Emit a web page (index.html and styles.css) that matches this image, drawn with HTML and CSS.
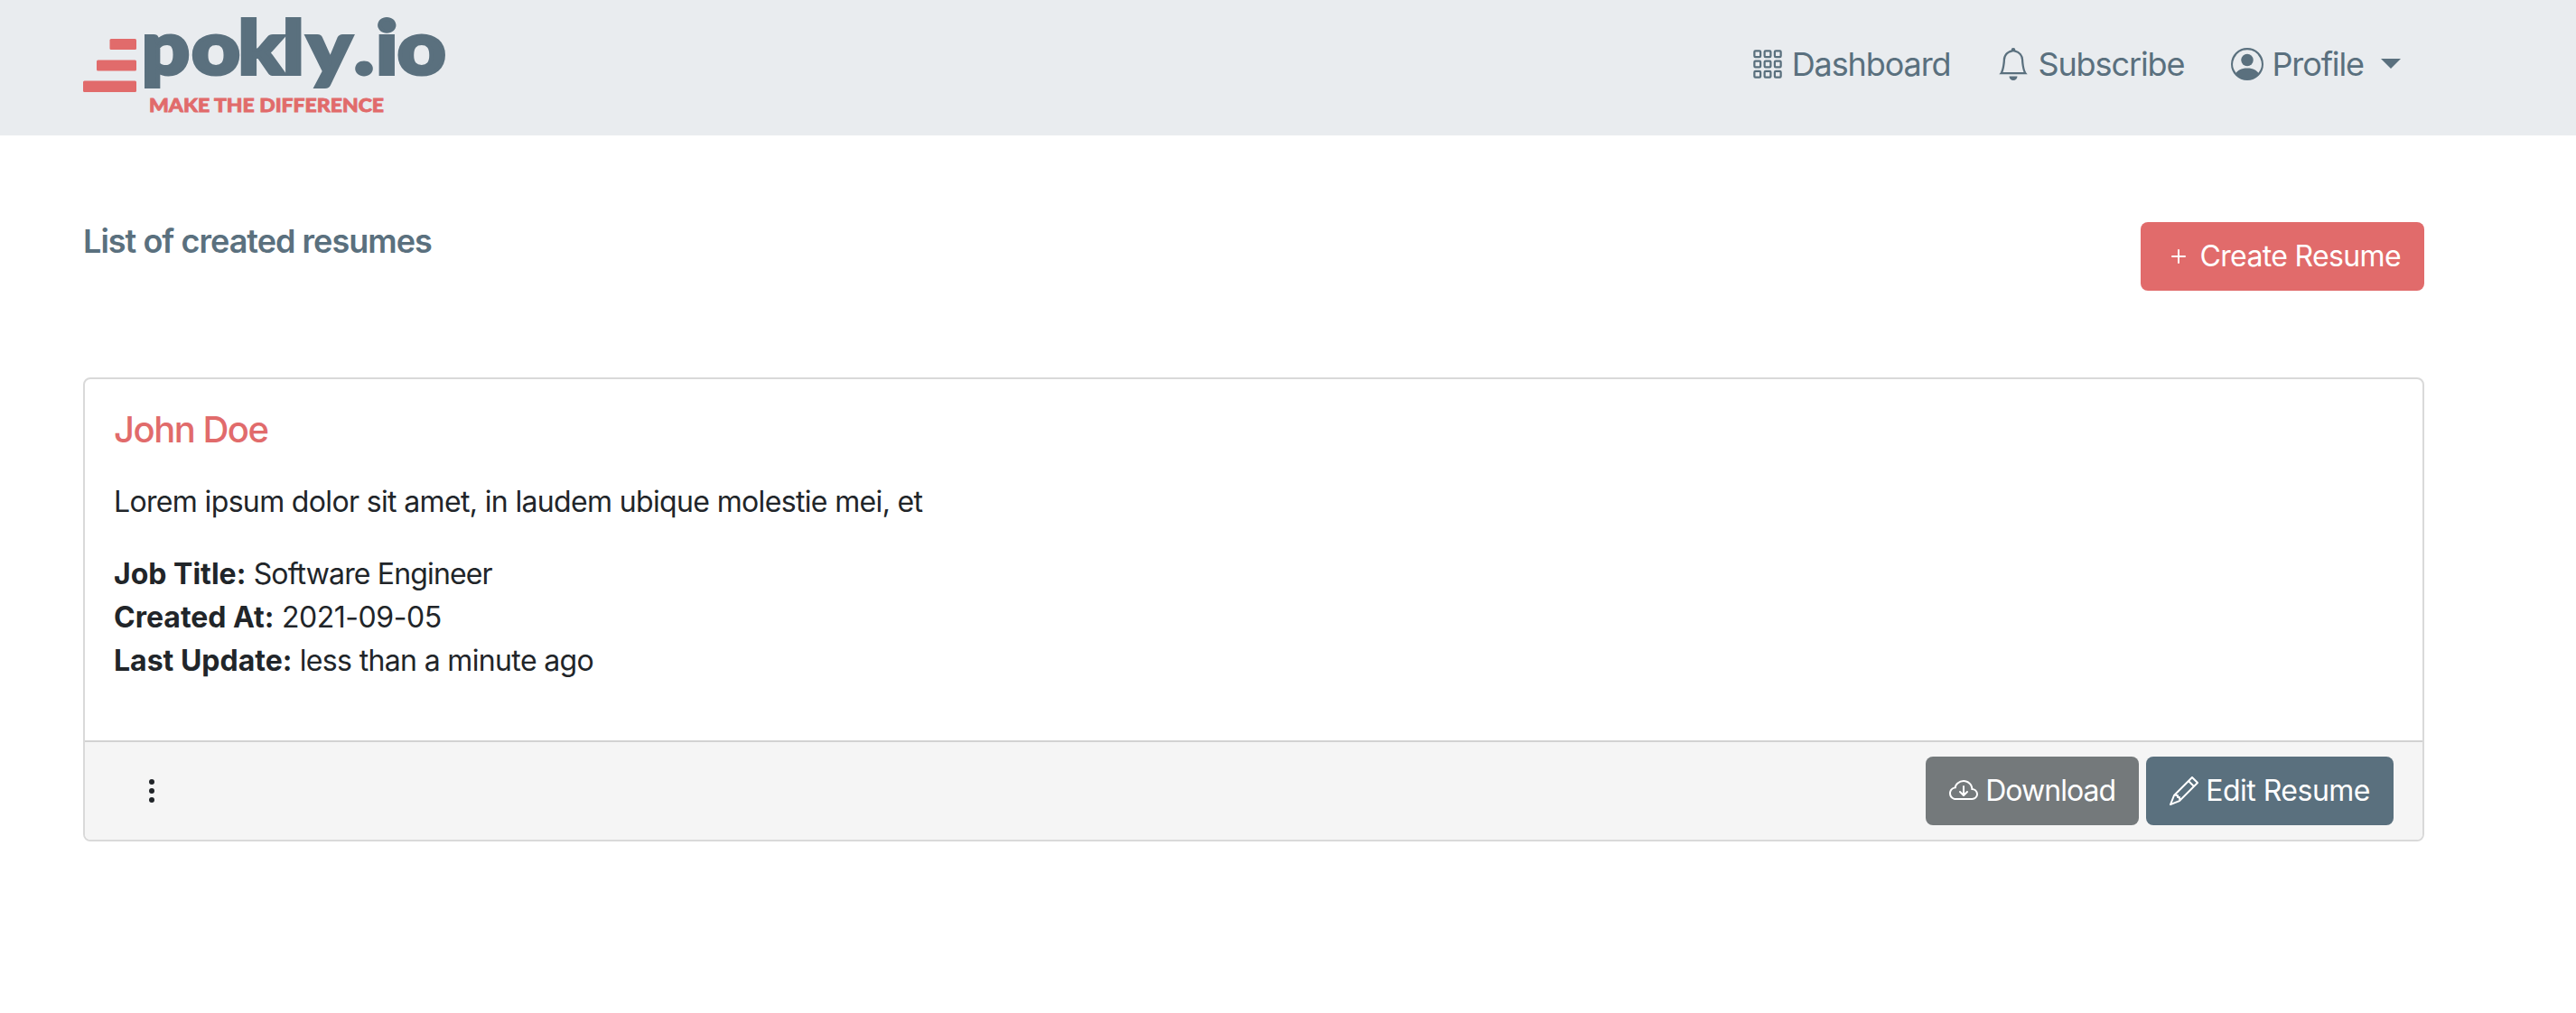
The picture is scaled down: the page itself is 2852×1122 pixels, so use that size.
FILE: index.html
```
<!DOCTYPE html>
<html lang="en">
<head>
    <meta charset="UTF-8">
    <meta name="viewport" content="width=device-width, initial-scale=1.0">
    <title>Epokly.io</title>
    <link rel="stylesheet" href="styles.css">
</head>
<body>
    <header class="navbar">
        <a class="brand" href="#">
            <svg class="logo" viewBox="0 0 404 150">
                <g class="logo-bars">
                    <rect x="29.5" y="43" width="29.5" height="12" rx="1.5"/>
                    <rect x="15" y="66.5" width="44" height="12" rx="1.5"/>
                    <rect x="0" y="89.5" width="59" height="12.5" rx="1.5"/>
                </g>
                <text class="logo-name" transform="scale(1.13 1)" x="57.5 106.5 152 195.5 219.5 265.5 287 308" y="82">pokly.io</text>
                <text class="logo-tagline" x="73" y="123.5" textLength="260" lengthAdjust="spacingAndGlyphs">MAKE THE DIFFERENCE</text>
            </svg>
        </a>
        <nav class="nav-links">
            <a class="nav-link" href="#">
                <svg class="nav-icon" viewBox="0 0 16 16" fill="none" stroke="currentColor">
                    <rect x="1.5" y="1.5" width="3" height="3" rx=".5"/>
                    <rect x="6.5" y="1.5" width="3" height="3" rx=".5"/>
                    <rect x="11.5" y="1.5" width="3" height="3" rx=".5"/>
                    <rect x="1.5" y="6.5" width="3" height="3" rx=".5"/>
                    <rect x="6.5" y="6.5" width="3" height="3" rx=".5"/>
                    <rect x="11.5" y="6.5" width="3" height="3" rx=".5"/>
                    <rect x="1.5" y="11.5" width="3" height="3" rx=".5"/>
                    <rect x="6.5" y="11.5" width="3" height="3" rx=".5"/>
                    <rect x="11.5" y="11.5" width="3" height="3" rx=".5"/>
                </svg>
                <span>Dashboard</span>
            </a>
            <a class="nav-link" href="#">
                <svg class="nav-icon" viewBox="0 0 16 16" fill="currentColor">
                    <path d="M8 16a2 2 0 0 0 2-2H6a2 2 0 0 0 2 2zM8 1.918l-.797.161A4.002 4.002 0 0 0 4 6c0 .628-.134 2.197-.459 3.742-.16.767-.376 1.566-.663 2.258h10.244c-.287-.692-.502-1.49-.663-2.258C12.134 8.197 12 6.628 12 6a4.002 4.002 0 0 0-3.203-3.92L8 1.917zM14.22 12c.223.447.481.801.78 1H1c.299-.199.557-.553.78-1C2.68 10.2 3 6.88 3 6c0-2.42 1.72-4.44 4.005-4.901a1 1 0 1 1 1.99 0A5.002 5.002 0 0 1 13 6c0 .88.32 4.2 1.22 6z"/>
                </svg>
                <span>Subscribe</span>
            </a>
            <a class="nav-link dropdown-toggle" href="#">
                <svg class="nav-icon" viewBox="0 0 16 16" fill="currentColor">
                    <path d="M11 6a3 3 0 1 1-6 0 3 3 0 0 1 6 0z"/>
                    <path fill-rule="evenodd" d="M0 8a8 8 0 1 1 16 0A8 8 0 0 1 0 8zm8-7a7 7 0 0 0-5.468 11.37C3.242 11.226 4.805 10 8 10s4.757 1.225 5.468 2.37A7 7 0 0 0 8 1z"/>
                </svg>
                <span>Profile</span>
            </a>
        </nav>
    </header>

    <main class="container">
        <div class="page-header">
            <h1>List of created resumes</h1>
            <a class="btn btn-create" href="#">
                <svg class="btn-icon" viewBox="0 0 16 16" fill="currentColor">
                    <path d="M8 4a.5.5 0 0 1 .5.5v3h3a.5.5 0 0 1 0 1h-3v3a.5.5 0 0 1-1 0v-3h-3a.5.5 0 0 1 0-1h3v-3A.5.5 0 0 1 8 4z"/>
                </svg>
                <span>Create Resume</span>
            </a>
        </div>

        <div class="card">
            <div class="card-body">
                <h2 class="card-title">John Doe</h2>
                <p class="card-text">Lorem ipsum dolor sit amet, in laudem ubique molestie mei, et</p>
                <ul class="card-details">
                    <li><strong>Job Title:</strong> <span class="job">Software Engineer</span></li>
                    <li><strong>Created At:</strong> <span class="date">2021-09-05</span></li>
                    <li><strong>Last Update:</strong> less than a minute ago</li>
                </ul>
            </div>
            <div class="card-footer">
                <button class="btn btn-menu" type="button" aria-label="More">
                    <svg class="btn-icon" viewBox="0 0 16 16" fill="currentColor">
                        <circle cx="8" cy="3" r="1.5"/>
                        <circle cx="8" cy="8" r="1.5"/>
                        <circle cx="8" cy="13" r="1.5"/>
                    </svg>
                </button>
                <div class="card-actions">
                    <a class="btn btn-download" href="#">
                        <svg class="btn-icon" viewBox="0 0 16 16" fill="currentColor">
                            <path d="M7.646 10.854a.5.5 0 0 0 .708 0l2-2a.5.5 0 0 0-.708-.708L8.5 9.293V5.5a.5.5 0 0 0-1 0v3.793L6.354 8.146a.5.5 0 1 0-.708.708l2 2z"/>
                            <path d="M4.406 3.342A5.53 5.53 0 0 1 8 2c2.69 0 4.923 2 5.166 4.579C14.758 6.804 16 8.137 16 9.773 16 11.569 14.502 13 12.687 13H3.781C1.708 13 0 11.366 0 9.318c0-1.763 1.266-3.223 2.942-3.593.143-.863.698-1.723 1.464-2.383zm.653.757c-.757.653-1.153 1.44-1.153 2.056v.448l-.445.049C2.064 6.805 1 7.952 1 9.318 1 10.785 2.23 12 3.781 12h8.906C13.98 12 15 10.988 15 9.773c0-1.216-1.02-2.228-2.313-2.228h-.5v-.5C12.188 4.825 10.328 3 8 3a4.53 4.53 0 0 0-2.941 1.1z"/>
                        </svg>
                        <span>Download</span>
                    </a>
                    <a class="btn btn-edit" href="#">
                        <svg class="btn-icon" viewBox="0 0 16 16" fill="currentColor">
                            <path d="M12.146.146a.5.5 0 0 1 .708 0l3 3a.5.5 0 0 1 0 .708l-10 10a.5.5 0 0 1-.168.11l-5 2a.5.5 0 0 1-.65-.65l2-5a.5.5 0 0 1 .11-.168l10-10zM11.207 2.5 13.5 4.793 14.793 3.5 12.5 1.207 11.207 2.5zm1.586 3L10.5 3.207 4 9.707V10h.5a.5.5 0 0 1 .5.5v.5h.5a.5.5 0 0 1 .5.5v.5h.293l6.5-6.5zm-9.761 5.175-.106.106-1.528 3.821 3.821-1.528.106-.106A.5.5 0 0 1 5 12.5V12h-.5a.5.5 0 0 1-.5-.5V11h-.5a.5.5 0 0 1-.468-.325z"/>
                        </svg>
                        <span>Edit Resume</span>
                    </a>
                </div>
            </div>
        </div>
    </main>
</body>
</html>
```
FILE: styles.css
```
* {
    box-sizing: border-box;
}
body {
    margin: 0;
    font-family: Inter, "Liberation Sans", sans-serif;
    font-size: 32px;
    line-height: 48px;
    letter-spacing: -0.65px;
    color: #212529;
    background-color: #fff;
}
a {
    color: inherit;
    text-decoration: none;
}
.navbar {
    display: flex;
    justify-content: space-between;
    height: 150px;
    padding: 0 194px 0 92px;
    color: #5a707e;
    background-color: #e9ecef;
}
.brand, .logo {
    display: block;
}
.logo {
    width: 404px;
    height: 150px;
}
.logo-bars {
    fill: #e16b6b;
}
.logo-name {
    font-family: Lato, sans-serif;
    font-size: 82px;
    font-weight: 900;
    letter-spacing: 0;
    fill: #5a707e;
    stroke: #5a707e;
    stroke-width: 4px;
}
.logo-tagline {
    font-family: Lato, sans-serif;
    font-size: 21px;
    font-weight: 900;
    letter-spacing: 0;
    fill: #e16b6b;
    stroke: #e16b6b;
    stroke-width: 0.8px;
}
.nav-links {
    display: flex;
    gap: 52px;
    height: 141px;
    align-items: center;
    font-size: 36px;
    letter-spacing: -1.1px;
}
.nav-link {
    display: flex;
    align-items: center;
    gap: 9px;
}
.nav-icon {
    width: 36px;
    height: 36px;
}
.dropdown-toggle::after {
    content: "";
    margin-left: 10px;
    border-top: 11px solid;
    border-left: 11px solid transparent;
    border-right: 11px solid transparent;
}
.container {
    padding: 96px 168px 0 92px;
}
.page-header {
    display: flex;
    justify-content: space-between;
    align-items: flex-start;
    margin-bottom: 96px;
}
h1 {
    margin: 0;
    font-size: 36px;
    font-weight: 600;
    line-height: 43px;
    letter-spacing: -0.98px;
    color: #5a707e;
}
strong {
    letter-spacing: 0;
}
.job {
    letter-spacing: -0.85px;
}
.date {
    letter-spacing: -0.45px;
}
.btn {
    display: flex;
    align-items: center;
    gap: 8px;
    height: 76px;
    padding: 0 26px;
    border: none;
    border-radius: 8px;
    color: #fff;
}
.btn-icon {
    width: 32px;
    height: 32px;
}
.btn-create {
    background-color: #e16b6b;
}
.btn-download {
    letter-spacing: -0.95px;
    background-color: #74797b;
}
.btn-edit {
    letter-spacing: -0.5px;
    background-color: #5a707e;
}
.btn-menu {
    color: #212529;
    background: none;
}
.card {
    border: 2px solid #d9d9d9;
    border-radius: 8px;
}
.card-body {
    padding: 32px 32px 64px;
}
.card-title {
    margin: 0 0 32px;
    font-size: 40px;
    font-weight: 500;
    line-height: 48px;
    letter-spacing: -1.5px;
    color: #e16b6b;
}
.card-text {
    margin: 0 0 32px;
}
.card-details {
    margin: 0;
    padding: 0;
    list-style: none;
}
.card-footer {
    display: flex;
    justify-content: space-between;
    padding: 16px 32px;
    border-top: 2px solid #d2d2d2;
    border-radius: 0 0 6px 6px;
    background-color: #f5f5f5;
}
.card-actions {
    display: flex;
    gap: 8px;
}
```
